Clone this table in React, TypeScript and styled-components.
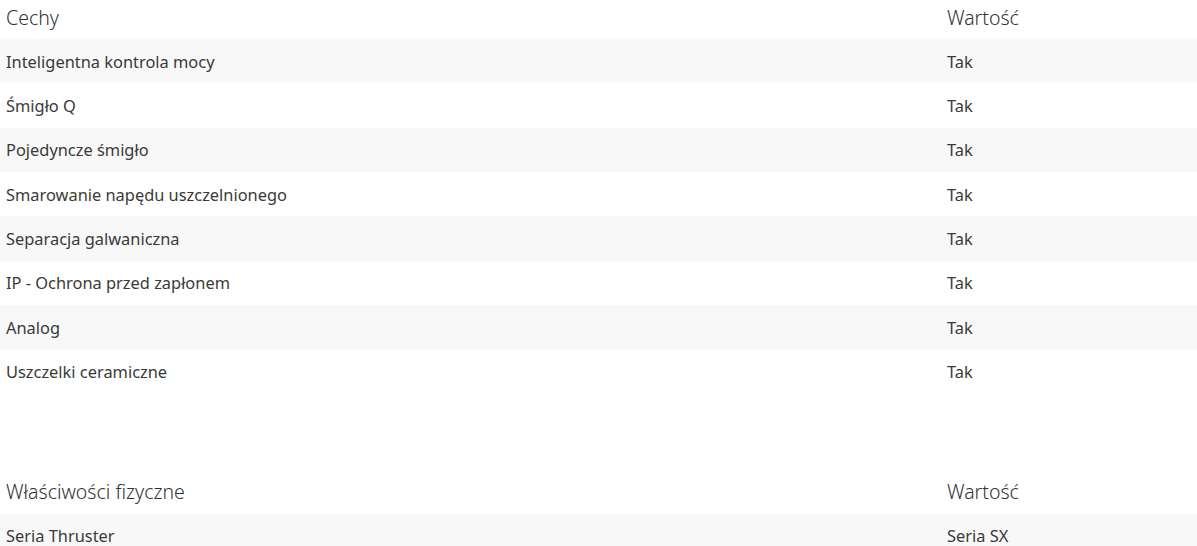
import styled, { createGlobalStyle } from 'styled-components';

const GlobalStyle = createGlobalStyle`
  body {
    margin: 0;
    background: #fff;
    font-family: 'Noto Sans', 'Open Sans', sans-serif;
    color: #333;
  }
`;

const Page = styled.div`
  width: 1197px;
`;

const Table = styled.div`
  display: grid;
  grid-template-columns: 941px 1fr;
  margin-bottom: 81px;
`;

const HeadCell = styled.div`
  height: 39px;
  padding: 0 6px 5px;
  box-sizing: border-box;
  display: flex;
  align-items: center;
  font-size: 19.5px;
  font-weight: 300;
  color: #333;
`;

const Cell = styled.div<{ $shaded: boolean }>`
  height: 44.33px;
  padding: 0 6px;
  display: flex;
  align-items: center;
  font-size: 16.4px;
  font-weight: 400;
  color: #3a3a3a;
  background: ${(p) => (p.$shaded ? '#f8f8f8' : '#fff')};
`;

type Spec = { name: string; value: string };

const features: Spec[] = [
  { name: 'Inteligentna kontrola mocy', value: 'Tak' },
  { name: 'Śmigło Q', value: 'Tak' },
  { name: 'Pojedyncze śmigło', value: 'Tak' },
  { name: 'Smarowanie napędu uszczelnionego', value: 'Tak' },
  { name: 'Separacja galwaniczna', value: 'Tak' },
  { name: 'IP - Ochrona przed zapłonem', value: 'Tak' },
  { name: 'Analog', value: 'Tak' },
  { name: 'Uszczelki ceramiczne', value: 'Tak' },
];

const physical: Spec[] = [{ name: 'Seria Thruster', value: 'Seria SX' }];

function SpecTable({ title, rows }: { title: string; rows: Spec[] }) {
  return (
    <Table>
      <HeadCell>{title}</HeadCell>
      <HeadCell>Wartość</HeadCell>
      {rows.map((r, i) => [
        <Cell key={r.name} $shaded={i % 2 === 0}>{r.name}</Cell>,
        <Cell key={r.name + '-v'} $shaded={i % 2 === 0}>{r.value}</Cell>,
      ])}
    </Table>
  );
}

export default function App() {
  return (
    <Page>
      <GlobalStyle />
      <SpecTable title="Cechy" rows={features} />
      <SpecTable title="Właściwości fizyczne" rows={physical} />
    </Page>
  );
}
